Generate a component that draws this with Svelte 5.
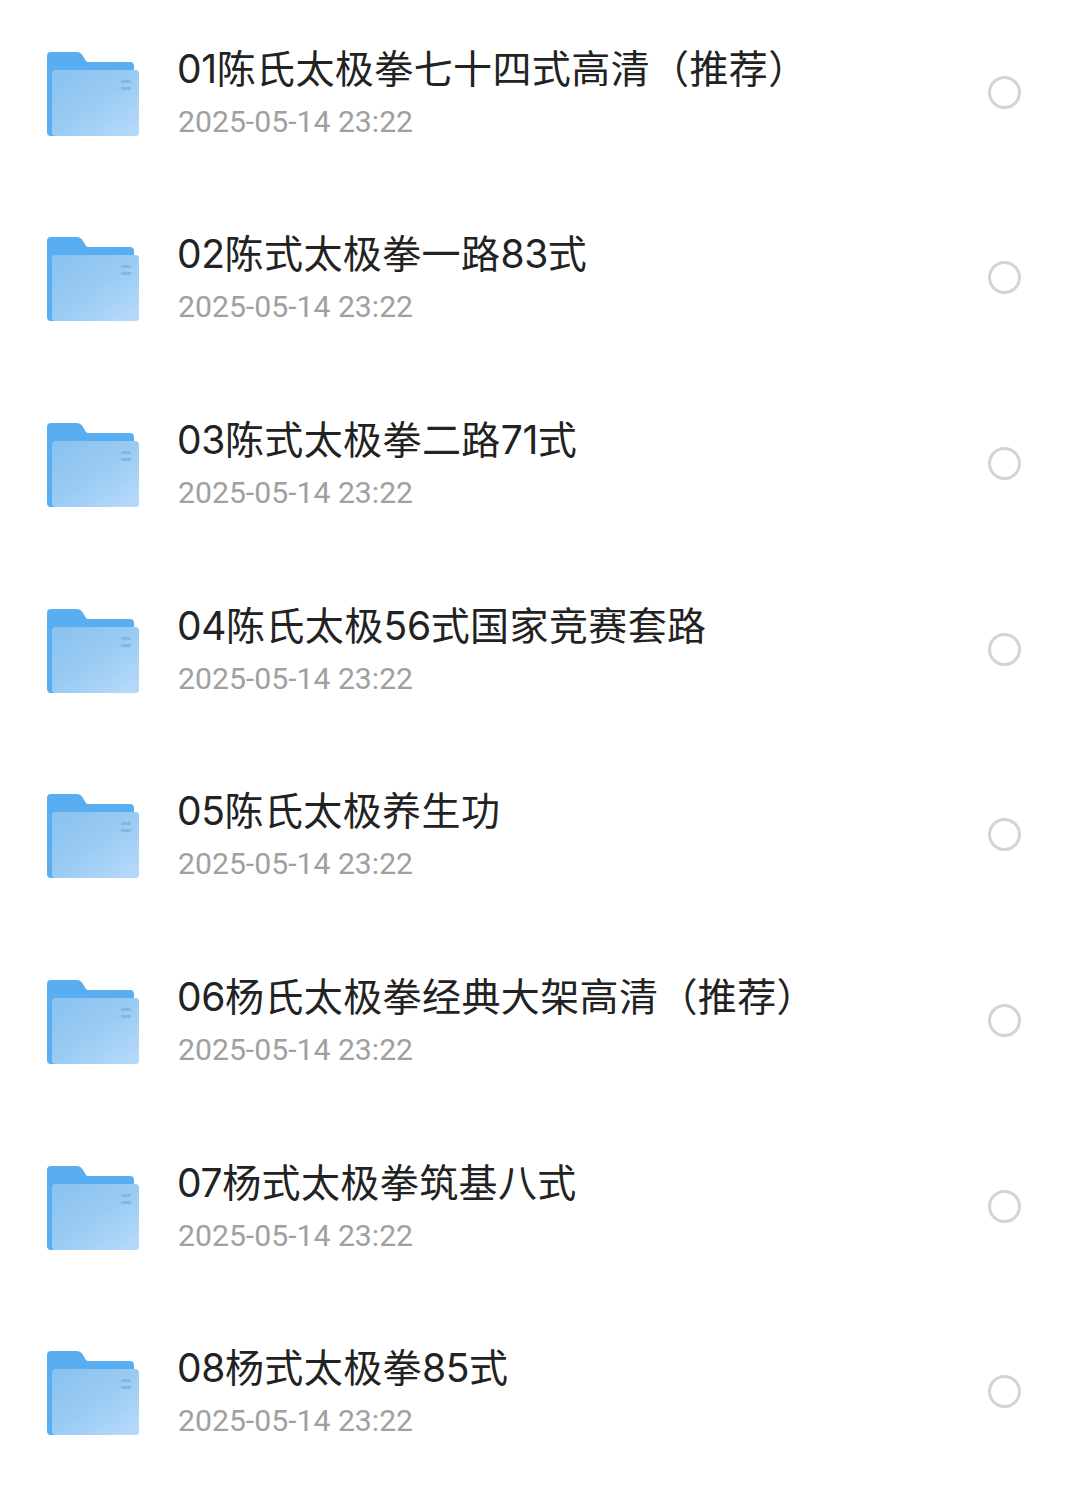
<script>
  const files = [
    "01陈氏太极拳七十四式高清（推荐）",
    "02陈式太极拳一路83式",
    "03陈式太极拳二路71式",
    "04陈氏太极56式国家竞赛套路",
    "05陈氏太极养生功",
    "06杨氏太极拳经典大架高清（推荐）",
    "07杨式太极拳筑基八式",
    "08杨式太极拳85式",
  ];

  // digits run a little tighter than the CJK text around them
  const parts = (name) => name.split(/(\d+)/).filter(Boolean);
</script>

<ul class="list">
  {#each files as name}
    <li class="row">
      <svg class="folder" width="92" height="84" viewBox="0 0 92 84">
        <defs>
          <linearGradient id="front" x1="0.1" y1="0.1" x2="0.9" y2="0.95">
            <stop offset="0" stop-color="#8cc3ef" />
            <stop offset="0.5" stop-color="#9accf3" />
            <stop offset="1" stop-color="#b4d8fa" />
          </linearGradient>
        </defs>
        <path
          d="M0 4a4 4 0 0 1 4-4h26a6 6 0 0 1 5 2.500l4 6.500a3 3 0 0 0 2.500 1H83a4 4 0 0 1 4 4V80a4 4 0 0 1-4 4H4a4 4 0 0 1-4-4z"
          fill="#58aef0"
        />
        <rect x="5" y="18" width="87" height="66" rx="3.500" fill="url(#front)" />
        <rect x="74" y="28" width="10" height="3" rx="1" fill="#80b8e6" />
        <rect x="74" y="35" width="10" height="3" rx="1" fill="#80b8e6" />
      </svg>
      <div class="text">
        <div class="name">{#each parts(name) as part}<span class:num={/^\d/.test(part)}>{part}</span>{/each}</div>
        <div class="date">2025-05-14 23:22</div>
      </div>
      <span class="radio"></span>
    </li>
  {/each}
</ul>

<style>
  :global(body) {
    background: #ffffff;
  }

  .list {
    list-style: none;
    margin: 0;
    padding: 0;
  }

  .row {
    display: flex;
    align-items: flex-start;
    height: 185.65px;
    padding: 51.700px 59.500px 0 47px;
    box-sizing: border-box;
  }

  .folder {
    flex: none;
    display: block;
  }

  .text {
    flex: 1;
    margin-left: 38px;
    margin-top: -11px;
  }

  .name {
    font-family: Inter, "Noto Sans CJK SC", sans-serif;
    font-size: 39px;
    line-height: 56px;
    letter-spacing: 0.4px;
    color: #222222;
    white-space: nowrap;
  }

  .num {
    letter-spacing: -0.4px;
  }

  .date {
    margin-top: 5px;
    margin-left: 1px;
    font-family: Roboto, "Noto Sans", sans-serif;
    font-size: 30.200px;
    line-height: 40px;
    color: #a0a0a0;
  }

  .radio {
    flex: none;
    width: 33px;
    height: 33px;
    box-sizing: border-box;
    margin-top: 24px;
    border: 3px solid #d4d4d4;
    border-radius: 50%;
  }
</style>
